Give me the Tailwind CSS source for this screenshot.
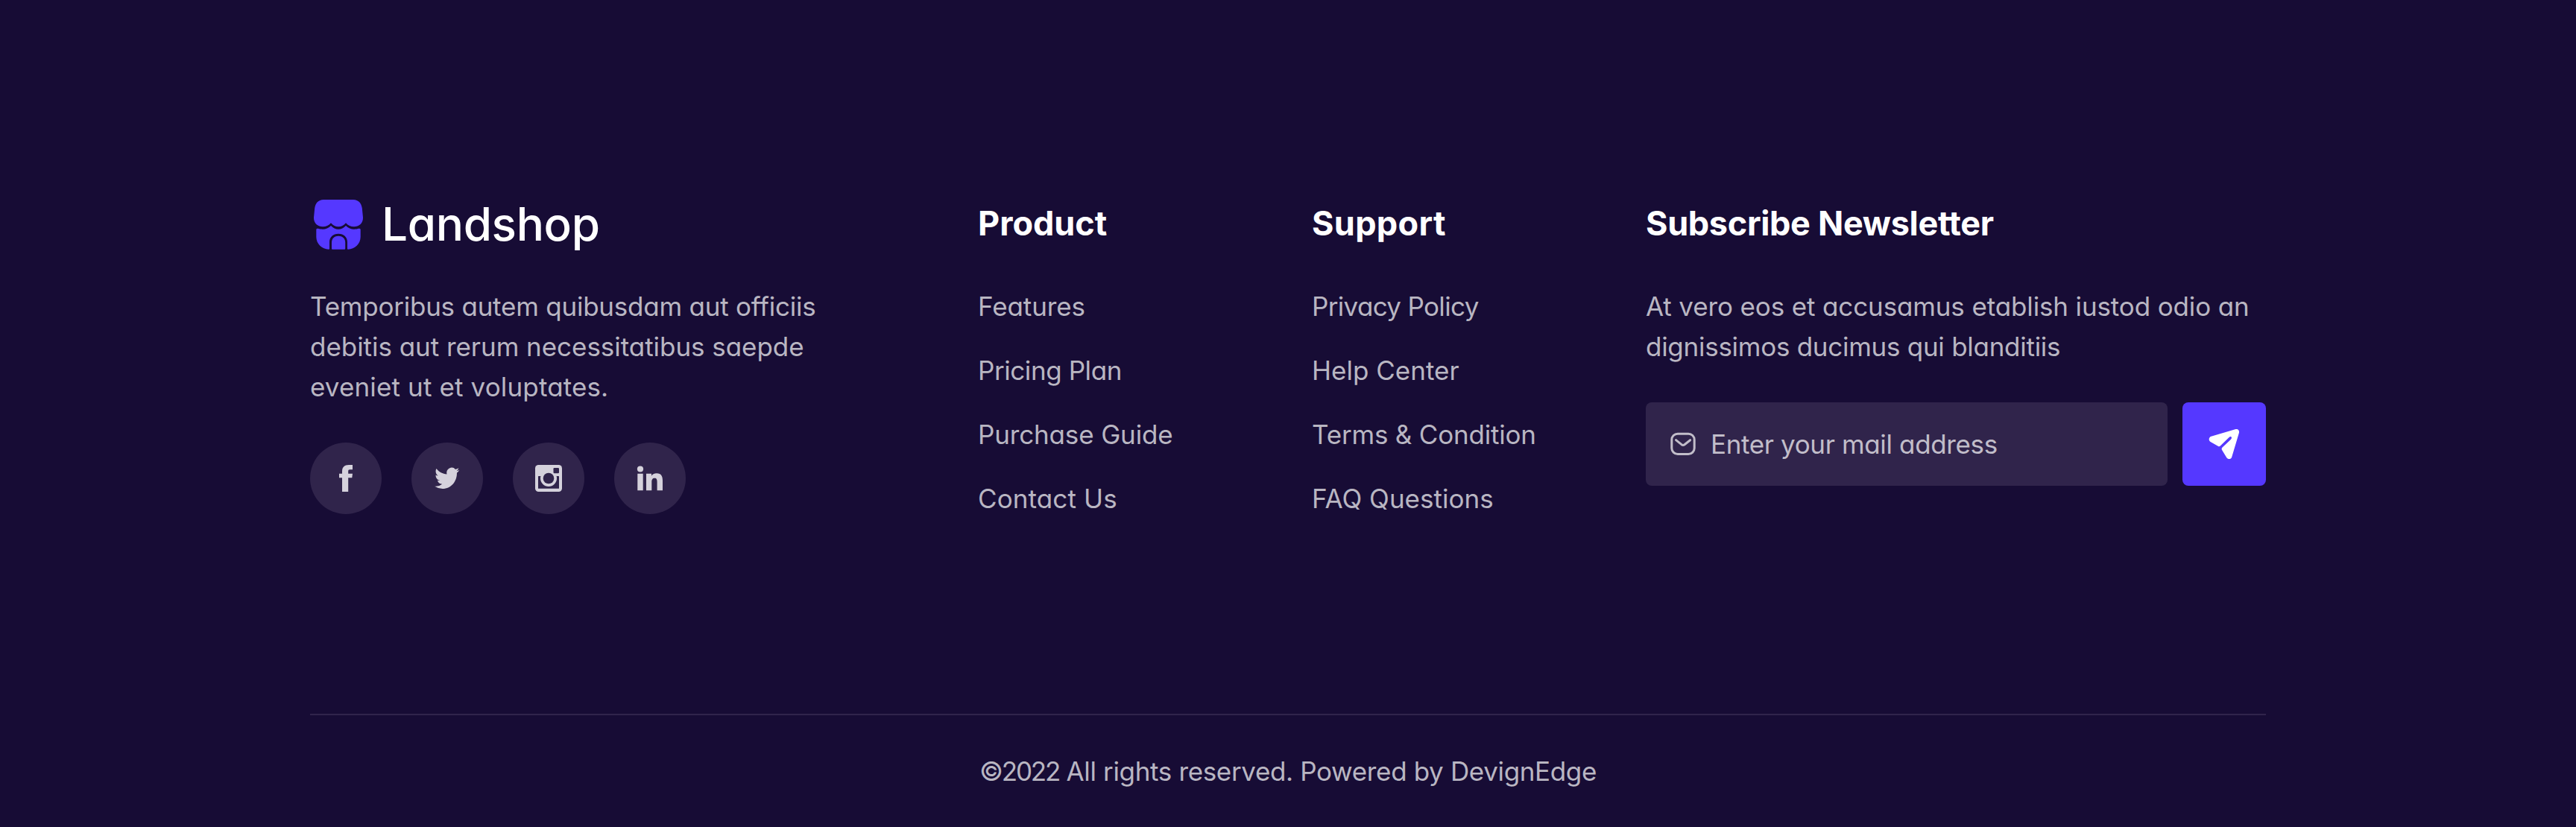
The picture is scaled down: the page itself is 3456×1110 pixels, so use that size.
<!DOCTYPE html>
<html lang="en">
<head>
<meta charset="utf-8">
<title>Landshop</title>
<script src="https://cdn.jsdelivr.net/npm/@tailwindcss/browser@4"></script>
</head>
<body class="bg-[#170c35]">
<footer class="h-[1110px] overflow-hidden bg-[#170c35] px-[416px] pt-[264px] font-['Inter',sans-serif] text-[35px] leading-[54px] text-[#b9b6c2] whitespace-nowrap [font-feature-settings:'cv11']">
  <div class="grid h-[694px] grid-cols-[896px_448px_448px_832px]">
    <section>
      <a class="flex h-[72px] items-center gap-[20px] text-[62px] leading-[72px] font-medium tracking-[-0.35px] text-white">
        <svg class="h-[72px] w-[76px]" viewBox="0 0 76 72" fill="#5538ff">
          <path d="M18 4H58C65 4 69 9 69.8 15.5L71 28C71.3 36 65 40.3 59 40.3C54.500 40.3 51 38.5 48 35.300C45 38.500 42 40.300 38 40.300S31 38.500 28 35.300C25 38.500 21.500 40.300 17 40.300C11 40.300 4.700 36 5 28L6.200 15.500C7 9 11 4 18 4Z"/>
          <path d="M10.700 42.800C12 43.300 14.500 43.700 17 43.700C21 43.700 25 42 28 39C31 42 34 43.700 38 43.700S45 42 48 39C51 42 55 43.700 59 43.700C61.500 43.700 64 43.300 65.300 42.800C67 42.300 67.700 43 67.700 44.500V54C67.700 63 60 70.700 51 70.700Q50 70.700 50 69.700V61C50 54 45 49.700 38 49.700S26 54 26 61V69.700Q26 70.700 25 70.700C16 70.700 8.300 63 8.300 54V44.500C8.300 43 9 42.300 10.700 42.800Z"/>
          <path d="M30 70.700Q29 70.700 29 69.700V61.500C29 56 33 52.700 38 52.700S47.200 56 47.200 61.500V69.700Q47.200 70.700 46.200 70.700Z"/>
        </svg>
        <span class="pt-0.5">Landshop</span>
      </a>
      <p class="mt-12">
        <span class="block tracking-[-0.23px]">Temporibus autem quibusdam aut officiis</span>
        <span class="block tracking-[-0.04px]">debitis aut rerum necessitatibus saepde</span>
        <span class="block tracking-[0.14px]">eveniet ut et voluptates.</span>
      </p>
      <div class="mt-12 flex gap-10">
        <a class="size-24 rounded-full bg-[#30244b]">
          <svg class="size-24" viewBox="0 0 96 96" fill="#d5d2dc"><path d="M43 66V47.300H39V41.700H43V38.500C43 33 46 30 52 30H57V36.300H53.500C51.700 36.300 51.200 37 51.200 38.500V41.700H57L56.300 47.300H51.200V66Z"/></svg>
        </a>
        <a class="size-24 rounded-full bg-[#30244b]">
          <svg class="size-24" viewBox="0 0 96 96" fill="#d5d2dc"><path transform="translate(31.2 30.4) scale(1.38 1.45)" d="M23.953 4.57a10 10 0 01-2.825.775 4.958 4.958 0 002.163-2.723c-.951.555-2.005.959-3.127 1.184a4.92 4.92 0 00-8.384 4.482C7.69 8.095 4.067 6.13 1.64 3.162a4.822 4.822 0 00-.666 2.475c0 1.71.87 3.213 2.188 4.096a4.904 4.904 0 01-2.228-.616v.06a4.923 4.923 0 003.946 4.827 4.996 4.996 0 01-2.212.085 4.936 4.936 0 004.604 3.417 9.867 9.867 0 01-6.102 2.105c-.39 0-.779-.023-1.17-.067a13.995 13.995 0 007.557 2.209c9.053 0 13.998-7.496 13.998-13.985 0-.21 0-.42-.015-.63A9.935 9.935 0 0024 4.59z"/></svg>
        </a>
        <a class="size-24 rounded-full bg-[#30244b]">
          <svg class="size-24" viewBox="0 0 96 96" fill="#d5d2dc">
            <rect x="30" y="30" width="36" height="36" rx="4.500"/>
            <rect x="34" y="45" width="28" height="16.800" rx=".5" fill="#30244b"/>
            <circle cx="48" cy="48" r="11"/>
            <circle cx="48" cy="48" r="7.300" fill="#30244b"/>
            <rect x="54.500" y="34" width="7.500" height="7.300" rx="1.200" fill="#30244b"/>
          </svg>
        </a>
        <a class="size-24 rounded-full bg-[#30244b]">
          <svg class="size-24" viewBox="0 0 96 96" fill="#d5d2dc">
            <circle cx="35" cy="35.500" r="4.100"/>
            <path d="M31.300 41.700H38.700V64.300H31.300ZM43 41.700H50V44.700C51.200 42.700 53.700 41.200 57 41.200C63.200 41.200 65 45.300 65 51V64.300H57.600V52.700C57.600 49.800 57 47.700 54.300 47.700C51.300 47.700 50.300 49.800 50.300 52.700V64.300H43Z"/>
          </svg>
        </a>
      </div>
    </section>

    <section class="pt-1.5">
      <h3 class="text-[45px] leading-[60px] font-bold tracking-[0px] text-white">Product</h3>
      <ul class="mt-[54px] flex flex-col gap-8">
        <li class="tracking-[-0.1px]">Features</li>
        <li class="tracking-[-0.42px]">Pricing Plan</li>
        <li class="tracking-[-0.15px]">Purchase Guide</li>
        <li class="tracking-[0.12px]">Contact Us</li>
      </ul>
    </section>

    <section class="pt-1.5">
      <h3 class="text-[45px] leading-[60px] font-bold tracking-[0.33px] text-white">Support</h3>
      <ul class="mt-[54px] flex flex-col gap-8">
        <li class="tracking-[-0.66px]">Privacy Policy</li>
        <li class="tracking-[0.02px]">Help Center</li>
        <li class="tracking-[-0.19px]">Terms &amp; Condition</li>
        <li class="tracking-[0.02px]">FAQ Questions</li>
      </ul>
    </section>

    <section class="pt-1.5">
      <h3 class="text-[45px] leading-[60px] font-bold tracking-[-0.33px] text-white">Subscribe Newsletter</h3>
      <p class="mt-[54px]">
        <span class="block tracking-[-0.13px]">At vero eos et accusamus etablish iustod odio an</span>
        <span class="block tracking-[-0.27px]">dignissimos ducimus qui blanditiis</span>
      </p>
      <form class="mt-12 flex gap-5">
        <label class="flex h-28 w-[700px] items-center gap-[19px] rounded-lg bg-[#30244b] px-8">
          <svg class="size-9 shrink-0" viewBox="0 0 36 36" fill="none" stroke="#c1bdc9" stroke-width="3" stroke-linecap="round" stroke-linejoin="round">
            <rect x="2.800" y="4.200" width="30.400" height="27.300" rx="8"/>
            <path d="M8.500 12.700L16 18.700Q18 20.200 20 18.700L27.600 12.700"/>
          </svg>
          <input type="email" class="h-[54px] min-w-0 flex-1 tracking-[-0.36px] placeholder:text-[#c1bdc9] placeholder:opacity-100 [font-feature-settings:'cv11']" placeholder="Enter your mail address">
        </label>
        <button type="button" aria-label="Subscribe" class="size-28 rounded-lg bg-[#5538ff]">
          <svg class="size-28" viewBox="0 0 112 112" fill="#fff"><path d="M71.500 36.100C74.500 35.400 76.700 37.700 75.900 41L66.200 73.500C65.200 76.700 61 76.900 59.300 74.300L52.900 63.700Q52 62.100 53.300 60.800L65 49.700C67.200 47.500 65.300 44.700 62.800 46.700L51 58.200Q49.700 59.700 48.100 59L38 53.300C34.800 51.400 35 47 38.500 45.700Z"/></svg>
        </button>
      </form>
    </section>
  </div>
  <div class="border-t-2 border-[#30244b] pt-12 text-center tracking-[-0.35px]"><span class="tracking-[-2.2px]">©2022</span> All rights reserved. Powered by DevignEdge</div>
</footer>
</body>
</html>
